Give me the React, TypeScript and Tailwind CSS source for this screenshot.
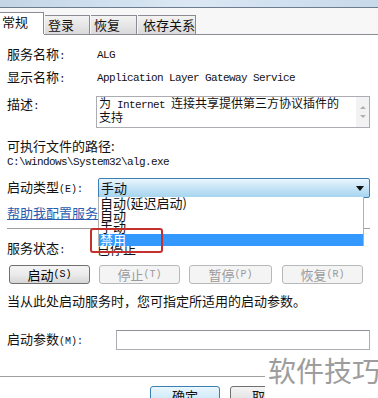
import React from "react";

const CJK = "font-['Noto_Sans_CJK_SC',sans-serif]";

function T({ s, mono = "text-[11px] tracking-[-0.6px]" }: { s: string; mono?: string }) {
  const parts = s.match(/[\x00-\x7F]+|[^\x00-\x7F]+/g) || [];
  return (
    <>
      {parts.map((p, i) =>
        /^[\x00-\x7F]/.test(p) ? (
          <span key={i} className={"font-['Liberation_Mono',monospace] whitespace-pre " + mono}>
            {p}
          </span>
        ) : (
          <span key={i}>{p}</span>
        )
      )}
    </>
  );
}

function Btn({ label, enabled = false, w }: { label: string; enabled?: boolean; w: string }) {
  return (
    <div
      className={
        "h-[19px] rounded-[3px] border flex items-center justify-center leading-[15px] " +
        w +
        " " +
        (enabled
          ? "border-[#707070] bg-gradient-to-b from-[#f4f4f4] via-[#ebebeb] to-[#d6d6d6] text-black"
          : "border-[#b5b9bc] bg-[#f4f4f4] text-[#9a9a9a]")
      }
    >
      <T s={label} mono="text-[10px]" />
    </div>
  );
}

export default function App() {
  return (
    <div className={"relative w-[378px] h-[398px] overflow-hidden bg-white text-[13px] text-[#111] " + CJK}>
      {/* title bar bottom */}
      <div className="h-[7px] bg-gradient-to-r from-[#c3d5e6] via-[#dbe8f4] to-[#c8d9ea]" />
      <div className="h-px bg-[#6b7d8f]" />
      {/* tab strip */}
      <div className="h-[26px] bg-[#f7f7f7] flex items-end">
        <div className="w-[44px] h-[22px] bg-white border-t border-r border-[#898c95] pl-[2px] leading-[18px]">
          常规
        </div>
        <div className="ml-px w-[45px] h-[19px] border-t border-r border-[#898c95] bg-gradient-to-b from-[#f3f3f3] to-[#dadada] pl-[3px] leading-[17px]">
          登录
        </div>
        <div className="ml-px w-[46px] h-[19px] border-t border-r border-[#898c95] bg-gradient-to-b from-[#f3f3f3] to-[#dadada] pl-[3px] leading-[17px]">
          恢复
        </div>
        <div className="ml-px w-[58px] h-[19px] border-t border-r border-[#898c95] bg-gradient-to-b from-[#f3f3f3] to-[#dadada] pl-[5px] leading-[17px]">
          依存关系
        </div>
      </div>
      <div className="flex h-px">
        <div className="w-[44px] bg-white" />
        <div className="flex-1 bg-[#898c95]" />
      </div>

      {/* content */}
      <div className="px-[7px] pt-[10px]">
        <div className="h-[20px] flex items-center leading-[14px]">
          <div className="w-[90px]">
            <T s="服务名称:" />
          </div>
          <T s="ALG" />
        </div>
        <div className="mt-[3px] h-[20px] flex items-center leading-[14px]">
          <div className="w-[90px]">
            <T s="显示名称:" />
          </div>
          <T s="Application Layer Gateway Service" />
        </div>
        <div className="mt-[8px] h-[32px] flex">
          <div className="w-[89px] pt-[1px] leading-[14px]">
            <T s="描述:" />
          </div>
          <div className="flex-1 mr-[1px] border border-[#abadb3] flex">
            <div className="flex-1 pl-[2px] text-[12px] leading-[12px] whitespace-nowrap">
              <div>
                <T s="为 Internet 连接共享提供第三方协议插件的" />
              </div>
              <div>支持</div>
            </div>
            <div className="w-[13px] bg-[#f2f2f2] flex flex-col items-center justify-center gap-[6px]">
              <div className="w-0 h-0 border-l-[3px] border-r-[3px] border-b-[3px] border-l-transparent border-r-transparent border-b-[#b0b0b0]" />
              <div className="w-0 h-0 border-l-[3px] border-r-[3px] border-t-[3px] border-l-transparent border-r-transparent border-t-[#b0b0b0]" />
            </div>
          </div>
        </div>
        <div className="mt-[10px] h-[16px] flex items-center leading-[14px]">可执行文件的路径:</div>
        <div className="mt-px h-[14px] flex items-center leading-[12px]">
          <T s="C:\windows\System32\alg.exe" />
        </div>
        <div className="mt-[9px] h-[20px] flex items-center">
          <div className="w-[91px] leading-[14px]">
            <T s="启动类型(E):" mono="text-[10px]" />
          </div>
          <div className="flex-1 h-[20px] mr-px rounded-[2px] border border-[#3c7fb1] bg-gradient-to-b from-[#eaf6fd] via-[#c6e4f7] to-[#a6d4f0] flex items-center pl-[2px] pr-[5px]">
            <span className="flex-1 leading-[14px]">手动</span>
            <div className="w-0 h-0 border-l-[4px] border-r-[4px] border-t-[5px] border-l-transparent border-r-transparent border-t-[#111]" />
          </div>
        </div>
        <div className="mt-[7px] h-[16px] flex items-center leading-[14px] text-[#2a5db0] underline">
          帮助我配置服务启动选项
        </div>
        <div className="mt-[7px] h-px bg-[#a0a0a0] mr-px" />
        <div className="mt-[12px] h-[16px] flex items-center leading-[14px]">
          <div className="w-[90px]">
            <T s="服务状态:" />
          </div>
          <span>已停止</span>
        </div>
        <div className="mt-[8px] flex pl-[2px]">
          <Btn label="启动(S)" enabled w="w-[81px]" />
          <div className="w-[9px]" />
          <Btn label="停止(T)" w="w-[81px]" />
          <div className="w-[9px]" />
          <Btn label="暂停(P)" w="w-[83px]" />
          <div className="w-[10px]" />
          <Btn label="恢复(R)" w="w-[81px]" />
        </div>
        <div className="mt-[9px] h-[16px] flex items-center leading-[14px]">
          当从此处启动服务时，您可指定所适用的启动参数。
        </div>
        <div className="mt-[21px] h-[20px] flex items-center">
          <div className="w-[109px] leading-[14px]">
            <T s="启动参数(M):" mono="text-[10px]" />
          </div>
          <div className="flex-1 h-[20px] mr-px border border-[#abadb3] border-t-[#8e9197] bg-white" />
        </div>
      </div>
      <div className="mt-[26px] h-px bg-[#a0a0a0]" />
      <div className="mt-[9px] flex pl-[150px] gap-[10px]">
        <div className="w-[70px] h-[20px] rounded-[3px] border border-[#3c7fb1] bg-gradient-to-b from-[#eaf6fd] to-[#bfe3f8] flex justify-center leading-[18px]">
          确定
        </div>
        <div className="w-[70px] h-[20px] rounded-[3px] border border-[#707070] bg-gradient-to-b from-[#f4f4f4] to-[#dddddd] flex justify-center leading-[18px]">
          取消
        </div>
      </div>

      {/* dropdown list overlay */}
      <div className="absolute left-[98px] top-[197px] w-[266px] h-[49px] bg-white border-x border-[#b0b0b0] text-[13px]">
        <div className="h-[12px] leading-[12px] pl-[1px] whitespace-nowrap">自动(延迟启动)</div>
        <div className="h-[12px] leading-[12px] pl-[1px]">自动</div>
        <div className="h-[12px] leading-[12px] pl-[1px]">手动</div>
        <div className="mt-px h-[12px] leading-[12px] pl-[1px] bg-[#3399ff] text-white">禁用</div>
      </div>

      {/* red highlight */}
      <div className="absolute left-[90px] top-[228px] w-[73px] h-[25px] border-2 border-[#c4302b] rounded-[3px]" />

      {/* watermark */}
      <div className="absolute left-[265px] top-[352px] right-0 bottom-0 bg-white flex items-start pl-[3px] pt-[2px]">
        <span className="text-[28px] leading-[32px] text-[#9d9d9d] whitespace-nowrap">软件技巧</span>
      </div>
    </div>
  );
}
